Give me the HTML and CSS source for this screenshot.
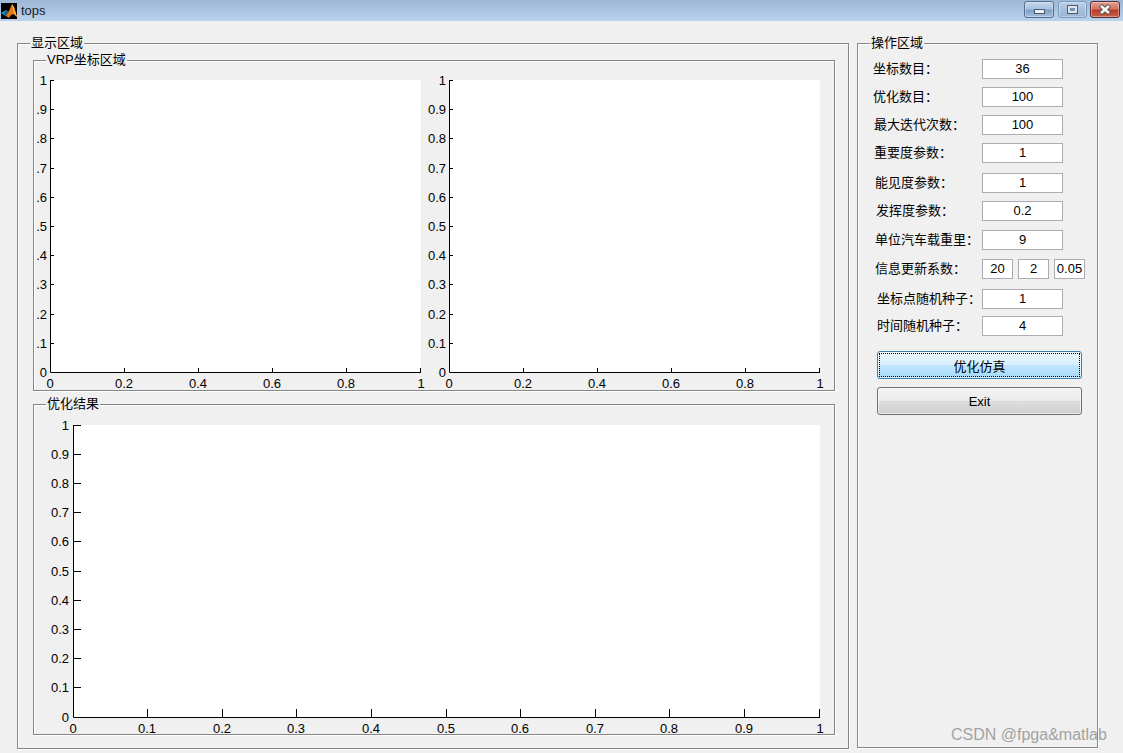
FILE: index.html
```html
<!DOCTYPE html>
<html lang="zh-CN">
<head>
    <meta charset="UTF-8">
    <meta name="viewport" content="width=device-width, initial-scale=1.0">
    <title>tops</title>
    <link rel="stylesheet" href="styles.css">
</head>
<body>
    <div class="titlebar">
        <svg class="app-icon" width="16" height="16" viewBox="0 0 16 16">
            <rect width="16" height="16" fill="#000"/>
            <path d="M0 10 L5 7 L8 9 L5 13 Z" fill="#2a9cc4"/>
            <path d="M5 7 L8 9 L5 13 L3 10 Z" fill="#17607e"/>
            <path d="M5 13 L8 8 L11 1 L13 4 L16 14 L13 11 L10 12 L8 15 Z" fill="#e8741c"/>
            <path d="M11 1 L13 4 L16 14 L13 11 L12 6 Z" fill="#f9b233"/>
        </svg>
        <span class="app-name">tops</span>
        <div class="win-buttons">
            <div class="win-btn win-btn-min"><span class="glyph-min"></span></div>
            <div class="win-btn win-btn-max"><span class="glyph-max"></span></div>
            <div class="win-btn win-btn-close">
                <svg width="14" height="11" viewBox="0 0 14 11">
                    <path d="M2.5 1.5 L11.5 9.5 M11.5 1.5 L2.5 9.5" stroke="#55504f" stroke-width="4.4"/>
                    <path d="M3 2 L11 9 M11 2 L3 9" stroke="#f4f4f4" stroke-width="2.6"/>
                </svg>
            </div>
        </div>
    </div>

    <div class="main">
        <div class="panel display-panel">
            <span class="panel-title">显示区域</span>

            <div class="panel sub-panel">
                <span class="panel-title">VRP坐标区域</span>
                <div class="axes-row">
                    <svg class="axes" width="392" height="329" viewBox="34 61 392 329">
                        <rect x="50" y="80" width="371" height="293" fill="#fff"/>
                        <path class="axis" d="M50.5 80 V372.5 H421 M50 80.5 H54 M50 109.5 H54 M50 138.5 H54 M50 168.5 H54 M50 197.5 H54 M50 226.5 H54 M50 255.5 H54 M50 284.5 H54 M50 314.5 H54 M50 343.5 H54 M124.5 372 V368 M198.5 372 V368 M272.5 372 V368 M346.5 372 V368 M420.5 372 V368"/>
                        <g class="ylabels">
                            <text x="47" y="85">1</text>
                            <text x="47" y="114">.9</text>
                            <text x="47" y="143">.8</text>
                            <text x="47" y="173">.7</text>
                            <text x="47" y="202">.6</text>
                            <text x="47" y="231">.5</text>
                            <text x="47" y="260">.4</text>
                            <text x="47" y="289">.3</text>
                            <text x="47" y="319">.2</text>
                            <text x="47" y="348">.1</text>
                            <text x="47" y="377">0</text>
                        </g>
                        <g class="xlabels">
                            <text x="50" y="388">0</text>
                            <text x="124" y="388">0.2</text>
                            <text x="198" y="388">0.4</text>
                            <text x="272" y="388">0.6</text>
                            <text x="346" y="388">0.8</text>
                            <text x="421" y="388">1</text>
                        </g>
                    </svg>
                    <svg class="axes" width="408" height="329" viewBox="426 61 408 329">
                        <rect x="449" y="80" width="371" height="293" fill="#fff"/>
                        <path class="axis" d="M449.5 80 V372.5 H820 M449 80.5 H453 M449 109.5 H453 M449 138.5 H453 M449 168.5 H453 M449 197.5 H453 M449 226.5 H453 M449 255.5 H453 M449 284.5 H453 M449 314.5 H453 M449 343.5 H453 M523.5 372 V368 M597.5 372 V368 M671.5 372 V368 M745.5 372 V368 M819.5 372 V368"/>
                        <g class="ylabels">
                            <text x="446" y="85">1</text>
                            <text x="446" y="114">0.9</text>
                            <text x="446" y="143">0.8</text>
                            <text x="446" y="173">0.7</text>
                            <text x="446" y="202">0.6</text>
                            <text x="446" y="231">0.5</text>
                            <text x="446" y="260">0.4</text>
                            <text x="446" y="289">0.3</text>
                            <text x="446" y="319">0.2</text>
                            <text x="446" y="348">0.1</text>
                            <text x="446" y="377">0</text>
                        </g>
                        <g class="xlabels">
                            <text x="449" y="388">0</text>
                            <text x="523" y="388">0.2</text>
                            <text x="597" y="388">0.4</text>
                            <text x="671" y="388">0.6</text>
                            <text x="745" y="388">0.8</text>
                            <text x="820" y="388">1</text>
                        </g>
                    </svg>
                </div>
            </div>

            <div class="panel sub-panel">
                <span class="panel-title">优化结果</span>
                <svg class="axes" width="800" height="329" viewBox="34 405 800 329">
                    <rect x="73" y="425" width="747" height="293" fill="#fff"/>
                    <path class="axis" d="M73.5 425 V717.5 H820 M73 425.5 H81 M73 454.5 H81 M73 483.5 H81 M73 512.5 H81 M73 541.5 H81 M73 571.5 H81 M73 600.5 H81 M73 629.5 H81 M73 658.5 H81 M73 687.5 H81 M147.5 717 V709 M222.5 717 V709 M296.5 717 V709 M371.5 717 V709 M446.5 717 V709 M520.5 717 V709 M595.5 717 V709 M669.5 717 V709 M744.5 717 V709 M819.5 717 V709"/>
                    <g class="ylabels">
                        <text x="69" y="430">1</text>
                        <text x="69" y="459">0.9</text>
                        <text x="69" y="488">0.8</text>
                        <text x="69" y="517">0.7</text>
                        <text x="69" y="546">0.6</text>
                        <text x="69" y="576">0.5</text>
                        <text x="69" y="605">0.4</text>
                        <text x="69" y="634">0.3</text>
                        <text x="69" y="663">0.2</text>
                        <text x="69" y="692">0.1</text>
                        <text x="69" y="722">0</text>
                    </g>
                    <g class="xlabels">
                        <text x="73" y="733">0</text>
                        <text x="147" y="733">0.1</text>
                        <text x="222" y="733">0.2</text>
                        <text x="296" y="733">0.3</text>
                        <text x="371" y="733">0.4</text>
                        <text x="446" y="733">0.5</text>
                        <text x="520" y="733">0.6</text>
                        <text x="595" y="733">0.7</text>
                        <text x="669" y="733">0.8</text>
                        <text x="744" y="733">0.9</text>
                        <text x="820" y="733">1</text>
                    </g>
                </svg>
            </div>
        </div>

        <div class="panel control-panel">
            <span class="panel-title">操作区域</span>

            <div class="row">
                <span class="label">坐标数目：</span>
                <div class="edit">36</div>
            </div>
            <div class="row">
                <span class="label">优化数目：</span>
                <div class="edit">100</div>
            </div>
            <div class="row">
                <span class="label indent-1">最大迭代次数：</span>
                <div class="edit">100</div>
            </div>
            <div class="row">
                <span class="label indent-1">重要度参数：</span>
                <div class="edit">1</div>
            </div>
            <div class="row row-gap-10">
                <span class="label indent-2">能见度参数：</span>
                <div class="edit">1</div>
            </div>
            <div class="row">
                <span class="label indent-3">发挥度参数：</span>
                <div class="edit">0.2</div>
            </div>
            <div class="row row-gap-9">
                <span class="label indent-2">单位汽车载重里：</span>
                <div class="edit">9</div>
            </div>
            <div class="row row-gap-9">
                <span class="label indent-2">信息更新系数：</span>
                <div class="edit edit-small">20</div>
                <div class="edit edit-small">2</div>
                <div class="edit edit-small">0.05</div>
            </div>
            <div class="row row-gap-10">
                <span class="label indent-4">坐标点随机种子：</span>
                <div class="edit">1</div>
            </div>
            <div class="row row-gap-7">
                <span class="label indent-4">时间随机种子：</span>
                <div class="edit">4</div>
            </div>

            <div class="btn btn-focus"><span class="btn-inner">优化仿真</span></div>
            <div class="btn">Exit</div>
        </div>
    </div>

    <div class="watermark">CSDN @fpga&amp;matlab</div>
</body>
</html>
```

FILE: styles.css
```css
html, body {
    margin: 0;
    height: 100%;
    overflow: hidden;
}
body {
    position: relative;
    width: 1123px;
    height: 753px;
    background-color: #f0f0f0;
    font-family: "Liberation Sans", "Noto Sans CJK SC", Arial, sans-serif;
    font-size: 13px;
    color: #000;
}

/* window title bar */
.titlebar {
    display: flex;
    align-items: center;
    height: 21px;
    box-sizing: border-box;
    padding-left: 1px;
    padding-right: 3px;
    background: linear-gradient(#9db7d7, #bad3ec);
}
.app-icon {
    flex: none;
}
.app-name {
    margin-left: 4px;
    color: #17202a;
}
.win-buttons {
    display: flex;
    gap: 3px;
    margin-left: auto;
    margin-bottom: 3px;
}
.win-btn {
    display: flex;
    align-items: center;
    justify-content: center;
    width: 30px;
    height: 17px;
    box-sizing: border-box;
    border: 1px solid #4f6a8c;
    border-radius: 3px;
    background: linear-gradient(#c5d8ec 0%, #a9c3df 45%, #7f9fc2 55%, #a4c0dc 100%);
    box-shadow: inset 0 0 0 1px rgba(255, 255, 255, 0.35);
}
.win-btn-min {
    margin-right: 1px;
}
.win-btn-max {
    width: 29px;
    border-color: #7c98ba;
    background: linear-gradient(#b9d0e8, #a5bfdc 50%, #9ab6d4 100%);
}
.win-btn-close {
    border-color: #5a2a38;
    background: linear-gradient(#e0a194 0%, #d4735f 45%, #b83a26 55%, #c9614a 100%);
}
.glyph-min {
    display: block;
    width: 9px;
    height: 3px;
    margin-top: 4px;
    border: 1px solid #4a5a70;
    background-color: #eef1f4;
}
.glyph-max {
    display: block;
    width: 5px;
    height: 3px;
    border: 2px solid #dfe5ec;
    outline: 1px solid #4a5a70;
    background-color: #7d93ad;
}

.main {
    display: flex;
    gap: 8px;
    height: 732px;
    box-sizing: border-box;
    padding: 22px 0 4px 17px;
}

/* group boxes */
.panel {
    position: relative;
    box-sizing: border-box;
    border: 1px solid #858585;
    box-shadow: 1px 1px 0 #fff, inset 1px 1px 0 #fff;
}
.panel-title {
    position: absolute;
    top: -9px;
    left: 12px;
    padding: 0 1px;
    line-height: 15px;
    background-color: #f0f0f0;
    white-space: nowrap;
}
.display-panel {
    display: flex;
    flex-direction: column;
    gap: 13px;
    width: 832px;
    padding: 16px 13px 0 15px;
}
.sub-panel {
    width: 802px;
    height: 331px;
}
.control-panel {
    display: flex;
    flex-direction: column;
    width: 241px;
    margin-bottom: 1px;
    padding-top: 15px;
    padding-left: 15px;
}

/* plots */
.axes-row {
    display: flex;
}
.axes {
    display: block;
    flex: none;
    overflow: visible;
}
.axis {
    fill: none;
    stroke: #000;
    stroke-width: 1;
}
.ylabels text,
.xlabels text {
    font-family: "Liberation Sans", Arial, sans-serif;
    font-size: 13px;
    fill: #000;
}
.ylabels text {
    text-anchor: end;
}
.xlabels text {
    text-anchor: middle;
}

/* parameter rows */
.row {
    display: flex;
    align-items: center;
    flex: none;
    height: 20px;
    margin-bottom: 8px;
}
.row-gap-7 {
    margin-top: -1px;
}
.row-gap-9 {
    margin-top: 1px;
}
.row-gap-10 {
    margin-top: 2px;
}
.label {
    flex: none;
    width: 109px;
    box-sizing: border-box;
    line-height: 18px;
    margin-top: -1px;
    white-space: nowrap;
}
.indent-1 {
    padding-left: 1px;
}
.indent-2 {
    padding-left: 2px;
}
.indent-3 {
    padding-left: 3px;
}
.indent-4 {
    padding-left: 4px;
}
.edit {
    width: 81px;
    height: 20px;
    box-sizing: border-box;
    border: 1px solid #abadb3;
    background-color: #fff;
    line-height: 18px;
    text-align: center;
}
.edit-small {
    width: 31px;
    margin-right: 5px;
}

/* buttons */
.btn {
    display: flex;
    align-items: center;
    justify-content: center;
    flex: none;
    width: 205px;
    height: 28px;
    box-sizing: border-box;
    margin-left: 4px;
    margin-top: 8px;
    border: 1px solid #707070;
    border-radius: 3px;
    background: linear-gradient(#f2f2f2 0%, #ebebeb 48%, #dddddd 52%, #cfcfcf 100%);
    box-shadow: inset 0 0 0 1px rgba(255, 255, 255, 0.6);
}
.btn-focus {
    margin-top: 7px;
    border-color: #3c7fb1;
    background: linear-gradient(#eaf6fd 0%, #d9f0fc 48%, #bee6fd 52%, #a7d9f5 100%);
}
.btn-inner {
    display: flex;
    align-items: center;
    justify-content: center;
    width: 201px;
    height: 24px;
    box-sizing: border-box;
    border: 1px dotted #000;
}

/* blog watermark over the bottom right corner */
.watermark {
    position: absolute;
    top: 726px;
    left: 951px;
    font-size: 16px;
    line-height: 18px;
    color: #a3a3a3;
    white-space: nowrap;
}
```
